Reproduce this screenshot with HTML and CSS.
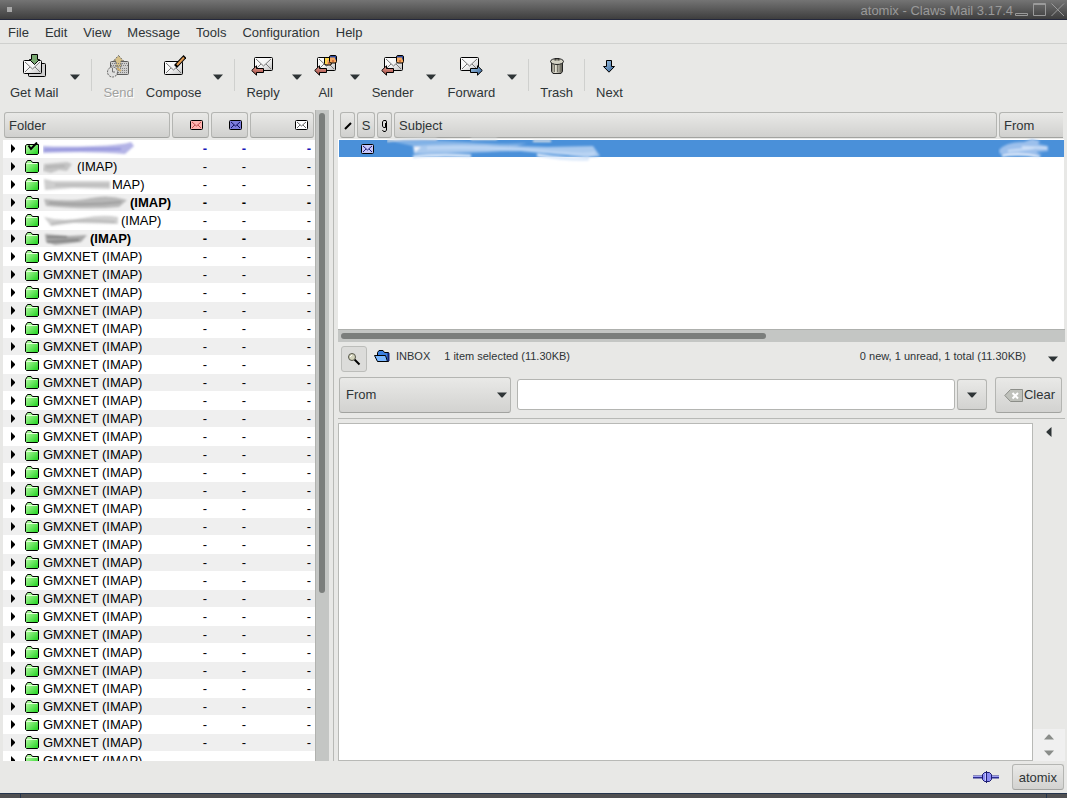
FILE: index.html
```html
<!DOCTYPE html>
<html lang="en">
<head>
<meta charset="utf-8">
<title>atomix - Claws Mail 3.17.4</title>
<link rel="stylesheet" href="styles.css">
</head>
<body>
<svg class="defs" aria-hidden="true">
  <defs>
    <linearGradient id="gPaper" x1="0" y1="0" x2="1" y2="1"><stop offset="0" stop-color="#fff"/><stop offset=".5" stop-color="#f4f4f4"/><stop offset="1" stop-color="#bdbdbd"/></linearGradient>
    <linearGradient id="gRed" x1="0" y1="0" x2="0" y2="1"><stop offset="0" stop-color="#e8a49a"/><stop offset="1" stop-color="#a0443a"/></linearGradient>
    <linearGradient id="gBlue" x1="0" y1="0" x2="1" y2="1"><stop offset="0" stop-color="#a8cbea"/><stop offset="1" stop-color="#2f5e94"/></linearGradient>
    <linearGradient id="gGreen" x1="0" y1="0" x2="1" y2="1"><stop offset="0" stop-color="#c8ffb4"/><stop offset="1" stop-color="#18d018"/></linearGradient>
    <linearGradient id="gCan" x1="0" y1="0" x2="1" y2="0"><stop offset="0" stop-color="#77756a"/><stop offset=".35" stop-color="#e4e2d4"/><stop offset="1" stop-color="#5c5a50"/></linearGradient>
    <filter id="soft" x="-10%" y="-30%" width="120%" height="160%"><feGaussianBlur stdDeviation="1"/></filter>
    <symbol id="down" viewBox="0 0 10 6"><path d="M0 0.500H10L5.500 5.500H4.500Z" fill="#2e3436"/></symbol>
    <symbol id="env" viewBox="0 0 20 15"><rect x="0.500" y="0.500" width="18" height="13" rx="1" fill="url(#gPaper)" stroke="#000"/><path d="M2 2L9.500 9L17 2M2 12L7 7M17 12L12 7" fill="none" stroke="#777"/></symbol>
    <symbol id="arrL" viewBox="0 0 13 11"><path d="M.7 5.500L5.500 .8V3.500H12.500V7.500H5.500V10.200Z" fill="url(#gRed)" stroke="#000"/></symbol>
    <symbol id="head" viewBox="0 0 8 9"><rect x="0.500" y="0.500" width="7" height="7.500" rx="1.500" fill="#f4a860" stroke="#000"/><path d="M1 1H7V4.500H6V2.500H1Z" fill="#2c4898"/><path d="M3 6H5" stroke="#b03c18"/></symbol>
    <symbol id="headFair" viewBox="0 0 8 9"><rect x="0.500" y="0.500" width="7" height="7.500" rx="1.500" fill="#f4b070" stroke="#000"/><path d="M1 1H7V3H3V7H1Z" fill="#ffd84c"/><path d="M4 6H6" stroke="#b03c18"/></symbol>
    <symbol id="tri" viewBox="0 0 6 9"><path d="M1 0L5 4V5L1 9Z" fill="#000"/></symbol>
    <symbol id="folder" viewBox="0 0 15 14"><path d="M.5 11.500V3.500L2.500 .5H6L7.500 2.500H13.500V11.500L12.500 12.500H1.500Z" fill="url(#gGreen)" stroke="#000"/><path d="M1.500 3.500H12" stroke="#e4ffda"/></symbol>
    <symbol id="folderCheck" viewBox="0 0 15 14"><path d="M.5 11.500V3.500L2 2.500H13.500V11.500L12.500 12.500H1.500Z" fill="url(#gGreen)" stroke="#000"/><path d="M3.500 3.500L6 7L12 .5" fill="none" stroke="#000" stroke-width="2"/></symbol>
    <symbol id="mini" viewBox="0 0 13 10"><rect x="0.500" y="0.500" width="12" height="9" rx="1" fill="currentColor" stroke="#000"/><path d="M2 2L6.500 6L11 2M2 8L5 5M11 8L8 5" fill="none" stroke="var(--fold)"/></symbol>
  </defs>
</svg>

<header class="titlebar">
  <span class="win-menu"></span>
  <h1 class="win-title">atomix - Claws Mail 3.17.4</h1>
  <svg class="win-buttons" width="50" height="14" viewBox="0 0 50 14" fill="none" stroke="#9a9a9a"><path d="M.5 10.500H12.500V12.500H.5ZM18.500 .5H30.500V12.500H18.500ZM18 1.500H31M36.500 .5L49 13M49 .5L36.500 13"/></svg>
</header>

<nav class="menubar">
  <button>File</button><button>Edit</button><button>View</button><button>Message</button><button>Tools</button><button>Configuration</button><button>Help</button>
</nav>

<div class="toolbar">
  <button class="tool"><svg width="24" height="24"><rect x="6.500" y="9.500" width="17" height="13" rx="1" fill="#d0d0d0" stroke="#000"/><use href="#env" x="1" y="6" width="20" height="15"/><path d="M9.500 .5H15.500V5.500H17.500L12.500 10.500L7.500 5.500H9.500Z" fill="#78a870" stroke="#000"/></svg><span>Get Mail</span></button>
  <button class="drop" aria-label="Get Mail options"><svg width="10" height="6"><use href="#down"/></svg></button>
  <i class="sep"></i>
  <button class="tool" disabled><svg width="24" height="24"><g opacity=".7"><rect x="3.500" y="7.500" width="18" height="13" rx="1" fill="#c4c4c4" stroke="#222"/><path d="M11.500 1.500L16.500 7H14V13H9V7H6.500Z" fill="#d0b060" stroke="#333" stroke-dasharray="2 1"/><circle cx="5.500" cy="18" r="5" fill="#ddd" stroke="#222" stroke-dasharray="2 1"/><path d="M5.500 14V18H8" fill="none" stroke="#444"/><path d="M5 9.500H21M4 11.500H21M9 14.500H21M11 16.500H21M11 18.500H21" stroke="#555" stroke-dasharray="1 1"/><path d="M10 14L14 17" stroke="#c89c40" stroke-width="2"/></g></svg><span>Send</span></button>
  <button class="tool"><svg width="24" height="24"><use href="#env" x="2" y="7" width="20" height="15"/><path d="M13.500 12.500L23 2.500" stroke="#000" stroke-width="4"/><path d="M15 11L22 3.500" stroke="#e09a50" stroke-width="2"/></svg><span>Compose</span></button>
  <button class="drop" aria-label="Compose options"><svg width="10" height="6"><use href="#down"/></svg></button>
  <i class="sep"></i>
  <button class="tool"><svg width="24" height="24"><use href="#env" x="3" y="3" width="20" height="15"/><use href="#arrL" y="11" width="13" height="11"/></svg><span>Reply</span></button>
  <button class="drop" aria-label="Reply options"><svg width="10" height="6"><use href="#down"/></svg></button>
  <button class="tool"><svg width="24" height="24"><use href="#env" x="3" y="3" width="20" height="15"/><use href="#headFair" x="10" y="3" width="8" height="9"/><use href="#head" x="15" y="1" width="8" height="9"/><use href="#arrL" y="11" width="13" height="11"/></svg><span>All</span></button>
  <button class="drop" aria-label="Reply to all options"><svg width="10" height="6"><use href="#down"/></svg></button>
  <button class="tool"><svg width="24" height="24"><use href="#env" x="3" y="3" width="20" height="15"/><use href="#head" x="15" y="1" width="8" height="9"/><use href="#arrL" y="11" width="13" height="11"/></svg><span>Sender</span></button>
  <button class="drop" aria-label="Reply to sender options"><svg width="10" height="6"><use href="#down"/></svg></button>
  <button class="tool"><svg width="24" height="24"><use href="#env" x="1" y="3" width="20" height="15"/><path d="M23.300 16.500L18.500 11.800V14.500H11.500V18.500H18.500V21.200Z" fill="url(#gBlue)" stroke="#000"/></svg><span>Forward</span></button>
  <button class="drop" aria-label="Forward options"><svg width="10" height="6"><use href="#down"/></svg></button>
  <i class="sep"></i>
  <button class="tool"><svg width="24" height="24"><path d="M6.500 8V17.500L8 19.500H16L17.500 17.500V8Z" fill="url(#gCan)" stroke="#222"/><path d="M9.500 11V18M12.500 11V18M15.500 11V18" stroke="#77756a"/><ellipse cx="12" cy="7.500" rx="6.500" ry="3" fill="#d4d2c4" stroke="#222"/><path d="M10 6.500V4.500H14V6.500" fill="#77756a" stroke="#222"/></svg><span>Trash</span></button>
  <i class="sep"></i>
  <button class="tool"><svg width="24" height="24"><path d="M9.500 6.500H14.500V12.500H17.500L12 18.200L6.500 12.500H9.500Z" fill="url(#gBlue)" stroke="#000"/></svg><span>Next</span></button>
</div>

<main class="panes">
  <section class="folders">
    <div class="folder-view">
      <table class="grid folder-table">
        <colgroup><col><col class="c-num"><col class="c-num"><col class="c-total"></colgroup>
        <thead><tr>
          <th><button class="head">Folder</button></th>
          <th><button class="head head-icon" aria-label="New"><svg class="mini new" width="13" height="10"><use href="#mini"/></svg></button></th>
          <th><button class="head head-icon" aria-label="Unread"><svg class="mini unread" width="13" height="10"><use href="#mini"/></svg></button></th>
          <th><button class="head head-icon" aria-label="Total"><svg class="mini total" width="13" height="10"><use href="#mini"/></svg></button></th>
        </tr></thead>
        <tbody id="accounts"></tbody>
      </table>
    </div>
    <div class="vscroll"><div class="vthumb"></div></div>
  </section>

  <section class="mail">
    <div class="messages">
      <table class="grid">
        <colgroup><col class="c-mark"><col class="c-status"><col class="c-mark"><col><col class="c-from"></colgroup>
        <thead><tr>
          <th><button class="head head-mid" aria-label="Mark"><svg width="8" height="8"><path d="M1 7L4 4M3 5L7 1" stroke="#000" stroke-width="2"/></svg></button></th>
          <th><button class="head head-mid">S</button></th>
          <th><button class="head head-mid" aria-label="Attachment"><svg width="7" height="12" fill="none" stroke="#000"><path d="M4.500 3V7.500H2.500L1.500 6V2L2.500 .5H5L5.500 2V10L4.500 11.500H2.500L1.500 10"/></svg></button></th>
          <th><button class="head">Subject</button></th>
          <th><button class="head head-last">From</button></th>
        </tr></thead>
        <tbody><tr class="selected">
          <td></td>
          <td class="status"><svg class="mini sel" width="13" height="10"><use href="#mini"/></svg></td>
          <td></td>
          <td class="smudged"><svg class="smudge-subject" width="222" height="28"><g filter="url(#soft)"><path d="M4 4Q40 2 80 5T140 6L130 9L70 8L30 10Z" fill="#82b2e6"/><path d="M26 9Q60 6 100 8T160 10L206 9L213 19Q200 22 175 17T100 15L27 17Z" fill="#a9c9ee"/><path d="M40 11Q100 9 150 14T208 16" fill="none" stroke="#bcd6f4" stroke-width="3"/><path d="M27 10H34L28 15Z" fill="#f4f8fe"/><path d="M26 20Q50 17 84 19M150 18Q180 23 202 22" fill="none" stroke="#dce9fa" stroke-width="3"/><path d="M0 4Q20 1 50 2M84 2H110M146 4H164" fill="none" stroke="#e4e6e6" stroke-width="2"/></g></svg></td>
          <td class="smudged"><svg class="smudge-from" width="54" height="24"><g filter="url(#soft)"><path d="M1 14Q8 6 26 6L34 3L42 5L40 8L50 10V15L38 16L44 19L12 20L2 18Z" fill="#9cc0ec"/><path d="M24 11L49 12M10 15L36 12" fill="none" stroke="#d0e2f8" stroke-width="2"/><path d="M4 20Q20 16 42 21" fill="none" stroke="#eaf2fd" stroke-width="2"/></g></svg></td>
        </tr></tbody>
      </table>
    </div>
    <div class="hscroll"><div class="hthumb"></div></div>

    <div class="infobar">
      <button class="quick" aria-label="Quick search"><svg width="14" height="14"><path d="M7 7L12.500 12.500" stroke="#000" stroke-width="2"/><circle cx="5" cy="5" r="3.500" fill="#d4d4bc" stroke="#55554a"/><path d="M3 5L5 3" stroke="#fff"/></svg></button>
      <svg class="inbox-icon" width="17" height="13"><path d="M3.500 6V2.500L5 .5H9L10.500 2.500H14.500V11.500H4Z" fill="#3c80e0" stroke="#000"/><path d="M.5 5.500H11.500L13.500 11.500H3.500Z" fill="#7cb8ff" stroke="#000"/><path d="M14.500 3V11" stroke="#102070" stroke-width="2"/></svg>
      <span>INBOX</span><span class="picked">1 item selected (11.30KB)</span>
      <span class="counts">0 new, 1 unread, 1 total (11.30KB)</span>
      <button class="more" aria-label="More"><svg width="10" height="6"><use href="#down"/></svg></button>
    </div>

    <form class="search">
      <div class="pick"><select class="raised" aria-label="Search field"><option>From</option></select><svg width="10" height="6"><use href="#down"/></svg></div>
      <input class="query" type="text" aria-label="Search text">
      <button type="button" class="raised history" aria-label="Search history"><svg width="10" height="6"><use href="#down"/></svg></button>
      <button type="button" class="raised clear"><svg width="19" height="15"><path d="M.8 7.500L6.500 1.500H18.500V13.500H6.500Z" fill="#bfc1bb" stroke="#8c8e89"/><path d="M8.500 5L14 10.500M14 5L8.500 10.500" stroke="#fff" stroke-width="2"/></svg>Clear</button>
    </form>

    <div class="reader">
      <article class="body-view"></article>
      <aside class="side">
        <button aria-label="Show parts"><svg width="6" height="10"><path d="M5.500 0V10L.5 5.500V4.500Z" fill="#2e3436"/></svg></button>
        <div class="stepper"><button aria-label="Up"><svg width="10" height="6"><path d="M0 5.500H10L5.500 .5H4.500Z" fill="#8a8d8a"/></svg></button><button aria-label="Down"><svg width="10" height="6"><path d="M0 .5H10L5.500 5.500H4.500Z" fill="#8a8d8a"/></svg></button></div>
      </aside>
    </div>
  </section>
</main>

<footer class="statusbar">
  <svg width="26" height="12"><path d="M0 6H26" stroke="#2c2c90" stroke-width="3"/><path d="M0 5.500H26" stroke="#a0a0f4"/><path d="M9.500 3.500L11.500 1.500H16.500L18.500 3.500V8.500L16.500 10.500H11.500L9.500 8.500Z" fill="#8c8cf4" stroke="#1c1c70"/><path d="M13.500 0V12" stroke="#1c1c70"/><path d="M12.500 2V10" stroke="#c8c8ff"/></svg>
  <button class="raised account">atomix</button>
</footer>
<div class="panel-edge"><i></i><i></i></div>
<script src="folders.js"></script>
</body>
</html>
```
FILE: styles.css
```css
* { box-sizing: border-box; }
body {
  margin: 0;
  height: 100vh;
  display: flex;
  flex-direction: column;
  overflow: hidden;
  background: #e8e8e6;
  color: #2e3436;
  font: 13px/16px "Liberation Sans", Arial, sans-serif;
}
button, select, input { font: inherit; color: inherit; margin: 0; }
button { padding: 0; border: 0; background: none; }
svg { display: block; flex: none; }
.defs { position: absolute; width: 0; height: 0; }

.titlebar {
  flex: none;
  height: 20px;
  display: flex;
  align-items: center;
  padding: 0 2px 0 7px;
  background: linear-gradient(#747474, #3e3e3e);
  border-bottom: 1px solid #24283c;
}
.win-menu { width: 5px; height: 5px; background: #a8a8a8; }
.win-title { flex: 1; margin: 0; padding-top: 2px; text-align: right; font-size: 13px; font-weight: 400; color: #9a9a9a; }
.win-buttons { margin-left: 2px; }

.menubar {
  flex: none;
  height: 24px;
  display: flex;
  gap: 16px;
  padding: 2px 8px 0;
  border-bottom: 1px solid #cfd0ce;
}

.toolbar { flex: none; display: flex; height: 66px; padding: 4px; }
.tool {
  display: flex;
  flex-direction: column;
  align-items: center;
  justify-content: space-between;
  min-width: 32px;
  padding: 6px 6px 5px;
}
.tool:disabled { color: #a0a19f; text-shadow: 1px 1px #fff; }
.drop { width: 22px; display: flex; justify-content: center; align-items: center; }
.sep { width: 1px; height: 32px; margin: 11px 5px 0; background: #cfd0ce; }

.panes { flex: 1; min-height: 0; display: flex; padding-right: 2px; }
.folders { flex: none; width: 334px; display: flex; padding: 0 4px 0 3px; border-right: 1px solid #b8b9b6; }
.folder-view { flex: 1; min-width: 0; overflow: hidden; position: relative; }
.vscroll { width: 14px; background: #c4c6c4; border-left: 1px solid #b0b1ae; padding: 3px 3px 0; }
.vthumb { width: 6px; height: 74%; border-radius: 3px; background: #7b7e7c; }

.grid { width: 100%; table-layout: fixed; border-spacing: 0; }
.grid th { height: 30px; padding: 2px 1px; font-weight: 400; }
.grid td { padding: 0; }
.head {
  display: flex;
  align-items: center;
  width: 100%;
  height: 26px;
  padding: 1px 4px 0;
  border: 1px solid #b4b5b2;
  border-bottom-color: #a2a3a0;
  border-radius: 3px;
  background: linear-gradient(#e9e9e7, #d0d0ce);
}
.head-icon { justify-content: flex-end; padding: 0 5px; }
.head-mid { justify-content: center; padding: 1px 0 0; }
.head-last { border-right: 0; border-radius: 3px 0 0 3px; }
.c-num { width: 39px; }
.c-total { width: 66px; }
.c-mark { width: 17px; }
.c-status { width: 20px; }
.c-from { width: 66px; }
.mini.new { color: #ffb4b0; --fold: #c05050; }
.mini.unread { color: #7c7cdc; --fold: #101060; }
.mini.total { color: #fff; --fold: #666; }
.mini.sel { color: #c8c8fa; --fold: #20207c; }

.folder-table tbody { color: #000; }
.folder-table tbody tr { background: #fff; }
.folder-table tbody tr:nth-child(even) { background: #efefef; }
.folder-table td { height: 18px; line-height: 17px; text-align: right; padding-right: 3px; border-bottom: 1px solid #fff; }
.folder-table td:first-child { padding: 0; overflow: hidden; }
.folder-table td:last-child { padding-right: 4px; }
.folder-table .strong { font-weight: 700; }
.folder-table .current { color: #1818b8; font-weight: 700; }
.name { display: flex; align-items: center; height: 17px; padding-left: 7px; white-space: nowrap; }
.name .icon { margin: 0 3px 0 9px; }

.mail { flex: 1; min-width: 0; display: flex; flex-direction: column; padding-left: 4px; }
.messages { flex: none; height: 219px; margin-right: 1px; padding-left: 1px; background: linear-gradient(#e8e8e6 29px, #fff 29px); }
.selected { height: 17px; background: #4a90d9; }
.status svg { margin: 0 0 0 5px; }
.smudged { position: relative; }
.smudge-subject { position: absolute; left: -6px; top: -3px; }
.smudge-from { position: absolute; left: 0; top: -4px; }
.hscroll { flex: none; height: 13px; padding: 3px; background: #c4c6c4; border-top: 1px solid #aeb0ad; }
.hthumb { width: 59%; height: 6px; border-radius: 3px; background: #7b7e7c; }

.infobar { flex: none; display: flex; align-items: center; height: 34px; padding: 0 7px 0 3px; font-size: 11px; }
.quick {
  width: 26px;
  height: 26px;
  display: flex;
  align-items: center;
  justify-content: center;
  border: 1px solid #bcbdba;
  border-radius: 3px;
  background: #dcdcda;
}
.infobar span { margin-bottom: 6px; }
.inbox-icon { margin: 0 5px 6px 7px; }
.infobar .picked { margin-left: 14px; }
.counts { margin-left: auto; }
.more { margin-left: 22px; }

.search { flex: none; display: flex; align-items: center; height: 43px; padding: 0 3px 5px 1px; border-bottom: 1px solid #b8b9b6; }
.raised {
  border: 1px solid #b4b5b2;
  border-bottom-color: #a2a3a0;
  border-radius: 3px;
  background: linear-gradient(#e9e9e7, #d2d2d0);
}
.pick { position: relative; width: 172px; margin-right: 6px; }
.pick select { appearance: none; display: block; width: 100%; height: 36px; padding: 1px 6px 0; }
.pick svg { position: absolute; right: 4px; top: 15px; pointer-events: none; }
.query { flex: 1; min-width: 0; height: 31px; padding: 0 6px; border: 1px solid #b4b5b2; border-radius: 3px; background: #fff; }
.history { width: 30px; height: 31px; margin: 0 8px 0 2px; display: flex; align-items: center; justify-content: center; }
.clear { height: 36px; padding: 1px 6px 0 8px; display: flex; align-items: center; gap: 1px; }

.reader { flex: 1; min-height: 0; display: flex; padding-top: 4px; }
.body-view { flex: 1; background: #fff; border: 1px solid #b8b9b6; }
.side { width: 32px; display: flex; flex-direction: column; justify-content: space-between; align-items: center; padding-top: 4px; }
.stepper { width: 100%; height: 32px; display: flex; flex-direction: column; background: #f0f0f0; }
.stepper button { flex: 1; display: flex; align-items: center; justify-content: center; }

.statusbar { flex: none; display: flex; justify-content: flex-end; align-items: center; gap: 13px; height: 32px; padding: 0 3px; }
.account { height: 26px; padding: 1px 6px 0; }
.panel-edge { flex: none; display: flex; justify-content: space-between; height: 5px; padding: 0 20px; background: #505052; border-top: 1px solid #24344c; }
.panel-edge i { width: 1px; background: #24344c; }
```
FILE: folders.js
```javascript
const blobs = {
  a: { w: 94, color: '#b4b4e6', d: 'M0 5Q20 6 50 5T88 1L91 5L82 13Q50 10 0 12Z', line: 'M1 9Q30 8 78 8', ink: '#9090dc' },
  b: { w: 34, color: '#c4c4c4', d: 'M1 5L24 3L29 5L24 12L16 11L8 14L0 12Z', line: 'M3 8L22 7', ink: '#b0b0b0' },
  c: { w: 69, color: '#cecece', d: 'M1 2L10 4L67 4V12L30 11L2 13Z', line: 'M12 8H66', ink: '#b8b8b8' },
  d: { w: 87, color: '#b8b8b8', d: 'M1 4Q30 7 48 3T84 5L76 12Q45 15 3 11Z', line: 'M6 8Q44 11 78 7', ink: '#9c9c9c' },
  e: { w: 78, color: '#d0d0d0', d: 'M1 4Q20 9 40 5T75 4V11L30 10L8 13Z', line: 'M8 11Q34 5 72 9', ink: '#b8b8b8' },
  f: { w: 47, color: '#a8a8a8', d: 'M2 3L26 5L44 4L38 11L12 14L3 11Z', line: 'M4 6H24M4 11L36 9', ink: '#808080' }
};
const rows = [
  { blob: 'a', text: '', cls: 'current', icon: 'folderCheck' },
  { blob: 'b', text: '(IMAP)' },
  { blob: 'c', text: 'MAP)' },
  { blob: 'd', text: '(IMAP)', cls: 'strong' },
  { blob: 'e', text: '(IMAP)' },
  { blob: 'f', text: '(IMAP)', cls: 'strong' }
];
while (rows.length < 35) rows.push({ text: 'GMXNET (IMAP)' });

document.getElementById('accounts').innerHTML = rows.map(r => {
  const b = blobs[r.blob];
  const smudge = b
    ? `<svg width="${b.w}" height="16"><g filter="url(#soft)"><path d="${b.d}" fill="${b.color}"/><path d="${b.line}" fill="none" stroke="${b.ink}" stroke-width="2"/></g></svg>`
    : '';
  return `<tr class="${r.cls || ''}"><td><div class="name"><svg width="6" height="9"><use href="#tri"/></svg>` +
    `<svg class="icon" width="15" height="14"><use href="#${r.icon || 'folder'}"/></svg>${smudge}<span>${r.text}</span></div></td>` +
    '<td>-</td><td>-</td><td>-</td></tr>';
}).join('');
```
